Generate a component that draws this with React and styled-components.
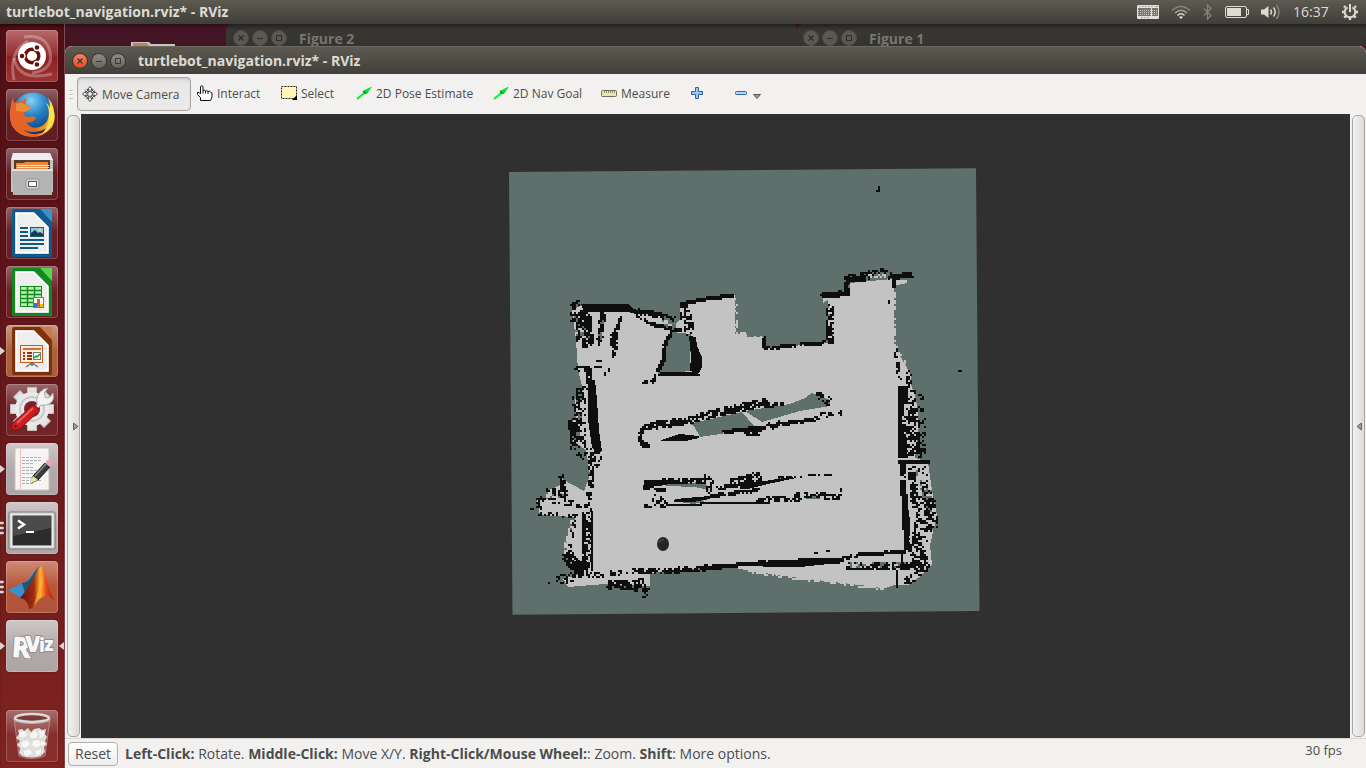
import React from "react";
import styled, { createGlobalStyle, css } from "styled-components";

const Global = createGlobalStyle`
  html, body, #root { height: 100%; }
  body {
    margin: 0;
    overflow: hidden;
    background: #451526;
    font-family: "Open Sans", "Noto Sans", sans-serif;
    color: #4c4c4c;
  }
  * { box-sizing: border-box; }
  button { font: inherit; color: inherit; margin: 0; padding: 0; border: 0; background: none; }
  svg { display: block; flex: none; }
`;

const Screen = styled.div`
  height: 100vh;
  display: flex;
  flex-direction: column;
`;

const TopPanel = styled.header`
  flex: none;
  height: 24px;
  display: flex;
  align-items: center;
  justify-content: space-between;
  padding: 0 7px 0 6px;
  background: linear-gradient(#5e5d51, #5a584f 2px, #3f3e39);
  color: #dfdbd2;
`;

const PanelTitle = styled.span`
  font-size: 14px;
  font-weight: 700;
  line-height: 22px;
  white-space: nowrap;
`;

const Indicators = styled.div`
  display: flex;
  align-items: center;
  gap: 12px;
`;

const Clock = styled.time`
  width: 36px;
  font-size: 14px;
  line-height: 24px;
`;

const Workspace = styled.div`
  flex: 1;
  min-height: 0;
  display: flex;
`;

const Launcher = styled.nav`
  flex: none;
  width: 65px;
  display: flex;
  flex-direction: column;
  gap: 7px;
  padding: 6px 0 6px 0;
  border-right: 1px solid #7d4a4f;
  background: linear-gradient(#500f15, #5d1319 30%, #6c1a1d 60%, #80231f);
  box-shadow: inset 0 3px 3px -1px rgba(0, 0, 0, 0.5);

  & > :last-child { margin-top: auto; }
`;

const LaunchRow = styled.div`
  display: grid;
  grid-template-columns: 6px 52px 6px;
  align-items: center;
`;

const tones = {
  plain: "linear-gradient(rgba(255,255,255,.34), rgba(255,255,255,.06) 48%, rgba(255,255,255,.05))",
  red: "linear-gradient(#b66a6b, #952d2f 48%, #8c2021 52%, #9d3434)",
  orange: "linear-gradient(#c49a80, #ad6238 50%, #a85d35)",
  matlab: "linear-gradient(#cd8b76, #b6563b 50%, #b0543c)",
  gray: "linear-gradient(#cec8c9, #b2a9aa 50%, #aea5a6)",
};

const LaunchTile = styled.button`
  width: 52px;
  height: 52px;
  border-radius: 4px;
  background: ${(p) => tones[p.$tone || "plain"]};
  box-shadow: inset 0 0 0 1px rgba(255, 255, 255, 0.2), 0 0 2px rgba(0, 0, 0, 0.25);
`;

const Desktop = styled.main`
  flex: 1;
  min-width: 0;
  display: flex;
  flex-direction: column;
`;

const BackStrip = styled.div`
  flex: none;
  height: 22px;
  display: grid;
  grid-template-columns: 161px 570px 1fr;
  background: linear-gradient(#2d0e19, #451424 5px, #431524);
`;

const FolderSlot = styled.div`
  display: flex;
  align-items: flex-end;
  padding-left: 66px;
`;

const BackWindow = styled.div`
  display: flex;
  align-items: center;
  gap: 12px;
  padding: 6px 0 0 7px;
  overflow: hidden;
  border-radius: 6px 0 0 0;
  background: linear-gradient(#22221f, #383733 6px, #34332f);
  font-size: 14px;
  font-weight: 700;
  color: #77756e;
`;

const AppWindow = styled.section`
  flex: 1;
  min-height: 0;
  display: flex;
  flex-direction: column;
  border-radius: 7px 7px 0 0;
  overflow: hidden;
  background: #f2f1f0;
`;

const TitleBar = styled.div`
  flex: none;
  height: 28px;
  display: flex;
  align-items: center;
  gap: 12px;
  padding-left: 7px;
  border-top: 1px solid #6b695e;
  border-radius: 7px 7px 0 0;
  background: linear-gradient(#5c5a50, #403f3a);
  font-size: 14px;
  font-weight: 700;
  color: #dfdbd2;
  white-space: nowrap;
`;

const WindowButtons = styled.div`
  display: flex;
  gap: 3px;
`;

const WindowButton = styled.button`
  width: 16px;
  height: 16px;
  border-radius: 50%;
  border: 1px solid ${(p) => (p.$dim ? "#4c4b46" : "#373632")};
  background: ${(p) =>
    p.$dim ? "#5a5852" : p.$close ? "linear-gradient(#f58562, #e0481c)" : "linear-gradient(#8d8b82, #66645d)"};
  color: ${(p) => (p.$dim ? "#2c2b28" : "#383732")};
`;

const Toolbar = styled.div`
  flex: none;
  height: 40px;
  display: flex;
  align-items: center;
  padding-left: 4px;
  background: #f2f1f0;
  font-size: 12px;
`;

const Grip = styled.span`
  width: 4px;
  height: 9px;
  margin-right: 4px;
  background: repeating-linear-gradient(#c9c7c4 0 1px, #fbfbfa 1px 2px, transparent 2px 4px);
`;

const ToolButton = styled.button`
  width: ${(p) => p.$width}px;
  height: 34px;
  display: flex;
  align-items: center;
  gap: 4px;
  padding-bottom: 2px;
  white-space: nowrap;
  ${(p) =>
    p.$active &&
    css`
      padding: 0 4px;
      margin-right: 6px;
      border: 1px solid #a7a5a2;
      border-radius: 4px;
      background: linear-gradient(#dddcda, #e9e8e6 6px, #ebeae9);
      box-shadow: inset 0 1px 2px rgba(0, 0, 0, 0.1);
    `}
`;

const Body = styled.div`
  flex: 1;
  min-height: 0;
  display: grid;
  grid-template-columns: 16px minmax(0, 1fr) 16px;
`;

const PanelToggle = styled.button`
  margin: 1px 1px 1px 2px;
  border: 1px solid #a9a7a3;
  border-radius: 5px;
  background: linear-gradient(90deg, #f3f2f1, #dddbd9);
  display: flex;
  align-items: center;
  justify-content: ${(p) => (p.$side === "left" ? "flex-end" : "center")};
`;

const View = styled.div`
  min-height: 0;
  background: #303030;
  & > svg { width: 100%; height: 100%; }
`;

const StatusBar = styled.footer`
  flex: none;
  height: 30px;
  display: flex;
  align-items: center;
  gap: 7px;
  padding: 0 24px 0 3px;
  border-top: 1px solid #dad8d5;
  font-size: 14px;
  white-space: nowrap;
`;

const ResetButton = styled.button`
  width: 50px;
  height: 24px;
  border: 1px solid #b2afab;
  border-radius: 4px;
  background: linear-gradient(#ffffff, #efeeed);
`;

const Hint = styled.p`
  margin: 0;
  flex: 1;
`;

const Fps = styled.span`
  align-self: flex-start;
  font-size: 13px;
  line-height: 22px;
`;

/* ---------- window controls ---------- */

function Controls({ dim }) {
  return (
    <WindowButtons>
      <WindowButton aria-label="Close" $close $dim={dim}>
        <svg width="14" height="14" stroke="currentColor" strokeWidth="1.3"><path d="M4.5 4.5l5 5M9.5 4.5l-5 5" /></svg>
      </WindowButton>
      <WindowButton aria-label="Minimize" $dim={dim}>
        <svg width="14" height="14" stroke="currentColor"><path d="M4 7.5h6" /></svg>
      </WindowButton>
      <WindowButton aria-label="Maximize" $dim={dim}>
        <svg width="14" height="14" stroke="currentColor" fill="none"><path d="M4.5 4.5h5v5h-5z" /></svg>
      </WindowButton>
    </WindowButtons>
  );
}

/* ---------- indicator icons ---------- */

const KeyboardIcon = () => (
  <svg width="22" height="14">
    <rect width="22" height="14" rx="1" fill="#e4e1dc" />
    <rect x="1" y="3" width="13" height="8" fill="#77756f" />
    <rect x="15" y="3" width="6" height="8" fill="#77756f" />
    <path d="M1 5.5h20M1 7.5h20M1 9.5h20" stroke="#c9c6c0" strokeDasharray="1 1" />
    <path d="M2 1.500h14M4 12.500h9" stroke="#aaa8a2" strokeDasharray="2 1" />
    <rect x="18" y="1" width="3" height="1" fill="#86c25a" />
  </svg>
);
const WifiIcon = () => (
  <svg width="20" height="14" fill="none" strokeWidth="1.6">
    <path d="M1 5.500Q10-2.500 19 5.500" stroke="#85837b" />
    <path d="M4 8Q10 2.500 16 8" stroke="#a5a298" />
    <path d="M6.500 10.500Q10 7 13.500 10.500" stroke="#dfdbd2" />
    <path d="M8 12L10 14 12 12Q10 10.500 8 12Z" fill="#dfdbd2" />
  </svg>
);
const BluetoothIcon = () => (
  <svg width="10" height="16" fill="none" stroke="#85837b" strokeWidth="1.2">
    <path d="M1 4.500l7 7-3.500 3.500V1L8 4.500l-7 7" />
  </svg>
);
const BatteryIcon = () => (
  <svg width="24" height="14" fill="none" stroke="#dfdbd2">
    <rect x=".5" y="1.500" width="21" height="11" rx="1.500" />
    <rect x="2.500" y="3.500" width="13" height="7" fill="#dfdbd2" />
    <path d="M22 4.500h1.500v5H22" />
  </svg>
);
const SoundIcon = () => (
  <svg width="20" height="16" fill="none" strokeWidth="1.500">
    <path d="M0 5.500h3L7.500 2v12L3 10.500H0Z" fill="#dfdbd2" />
    <path d="M9.500 5.500q2 2.500 0 5M12.500 3.500q3.500 4.500 0 9" stroke="#dfdbd2" />
    <path d="M15.500 1q5 7 0 14" stroke="#85837b" />
  </svg>
);
const GearIcon = () => (
  <svg width="18" height="18" fill="none" stroke="#dfdbd2">
    <path d="M6.500 4.300a5.300 5.300 0 1 0 5 0" strokeWidth="2" />
    <path d="M9 1v8" strokeWidth="2" />
    <path d="M4.500 4.500L3 3M13.500 4.500L15 3M3.500 9H1M14.500 9H17M5 13l-1.700 1.700M13 13l1.700 1.700M9 14.500V17" strokeWidth="2.400" />
  </svg>
);

/* ---------- toolbar icons ---------- */

const MoveIcon = () => (
  <svg width="16" height="16" fill="#fff" stroke="#4a4a4a">
    <path d="M4 4l8 8M12 4l-8 8" strokeWidth="2.500" />
    <path d="M4 4l8 8M12 4l-8 8" stroke="#fff" />
    <path d="M8 .5l2.500 3H9V6H7V3.500H5.500ZM8 15.500l2.500-3H9V10H7v2.500H5.500ZM.5 8l3-2.500V7H6v2H3.500v1.500ZM15.500 8l-3-2.500V7H10v2h2.500v1.500Z" />
    <rect x="6" y="6" width="4" height="4" stroke="#777" />
  </svg>
);
const HandIcon = () => (
  <svg width="16" height="16" viewBox="0 0 16 16" fill="#fff" stroke="#111">
    <path d="M3.500 15.500V12.500L.5 9.500V7.500H2L3.500 9V1.500Q4.700 0 6 1.500V5.500Q7.300 4.500 8.500 6 9.800 5 11 6.500 12.500 5.500 13.500 7L15 8V12L13.500 15.500Z" />
    <path d="M6 5.500v3M8.500 6v2.500M11 6.500v2.500" />
  </svg>
);
const SelectIcon = () => (
  <svg width="16" height="14">
    <rect x=".5" y=".5" width="15" height="12" fill="#fff6b4" stroke="#222" strokeDasharray="2 1" />
    <path d="M16 9v5h-5Z" fill="#000" />
  </svg>
);
const ArrowIcon = () => (
  <svg width="16" height="14">
    <path d="M1 13L9 6.500" stroke="#00f62e" strokeWidth="2.200" />
    <path d="M16 .5L11 8 9.500 7.500 6.500 5Z" fill="#05e32b" />
    <path d="M7 5.500l3 2" stroke="#087b1e" strokeWidth="1.500" />
  </svg>
);
const RulerIcon = () => (
  <svg width="16" height="7" fill="#e9e5ac" stroke="#6f6d59">
    <rect x=".5" y=".5" width="15" height="6" rx="1" />
    <path d="M3.500 1v2M5.500 1v2M7.500 1v2M9.500 1v2M11.500 1v2M13.500 1v2" strokeOpacity=".7" />
  </svg>
);
const PlusIcon = () => (
  <svg width="12" height="12" fill="#9fc4e8" stroke="#2c62a8">
    <path d="M4.500.5h3v4h4v3h-4v4h-3v-4h-4v-3h4Z" />
  </svg>
);
const MinusIcon = () => (
  <svg width="12" height="4" fill="#b7d3ee" stroke="#2c62a8"><rect x=".5" y=".5" width="11" height="3" rx="1" /></svg>
);
const CaretIcon = () => (
  <svg width="10" height="12"><path d="M2.500 7.500h7L6 11.500Z" fill="#999" stroke="#5c5c5c" /></svg>
);

/* ---------- launcher icons, drawn on a 52 unit square ---------- */

const Art = ({ children }) => <svg width="52" height="52" viewBox="0 0 52 52">{children}</svg>;

const DashArt = () => (
  <Art>
    <g fill="none" stroke="#fff" strokeOpacity=".28">
      <path d="M18 7Q40 4 44 22T26 43" strokeWidth="3" />
      <path d="M8 50Q2 22 22 11" strokeWidth="3" />
      <path d="M8 28Q12 52 46 44" strokeWidth="3" />
    </g>
    <circle cx="26" cy="26" r="14" fill="#fff" />
    <circle cx="26" cy="26" r="6.800" fill="none" stroke="#64110f" strokeWidth="3.400" />
    <g fill="#64110f" stroke="#fff" strokeWidth="1.400">
      <circle cx="16" cy="26" r="3" /><circle cx="31" cy="17.500" r="3" /><circle cx="31" cy="34.500" r="3" />
    </g>
  </Art>
);

const FirefoxArt = () => (
  <Art>
    <defs>
      <radialGradient id="globe" cx=".45" cy=".2" r=".8"><stop offset="0" stopColor="#8ad2f5" /><stop offset=".45" stopColor="#2484c6" /><stop offset="1" stopColor="#113a7a" /></radialGradient>
      <linearGradient id="fox" x1="0" x2="1"><stop offset="0" stopColor="#e8632c" /><stop offset=".55" stopColor="#e4641f" /><stop offset="1" stopColor="#fbd93c" /></linearGradient>
    </defs>
    <circle cx="27" cy="24" r="20.500" fill="url(#globe)" />
    <path d="M7 8Q7 12 9 14 13 12 15 13 18 10 21 9 19 13 20 16 25 17 25 19 22 22 18 24 18 28 23 28 27 26 30 29 26 35 20 33 26 42 36 37 43 33 43 23 47 30 42 38 31 46 17 41 29 49 40 42 48 34 48 23 50 31 46 38 38 48 26 48 13 48 6 37 1 25 7 8Z" fill="url(#fox)" />
    <path d="M42 9Q50 18 48 31 45 41 36 45 44 36 43 25 43 17 39 13 43 16 44 19 44 13 42 9Z" fill="#fde04a" />
    <path d="M10 15q5-3 10 1l5 2q-2 4-7 5l-8-1Z" fill="#f08a3b" />
  </Art>
);

const FilesArt = () => (
  <Art>
    <path d="M7 5h37l3 7v32H5V12Z" fill="#c4c4c4" />
    <path d="M7 5h37l3 7H5Z" fill="#ededed" />
    <rect x="8" y="12" width="36" height="11" fill="#5c3a24" />
    <path d="M10 23v-8h8l1-1h23v9Z" fill="#e68a43" />
    <path d="M11 17.500h32M11 19.500h32" stroke="#fbe3c8" />
    <path d="M6 21h41l-1 26H7Z" fill="#b4b4b4" />
    <path d="M6 21h41v2H6Z" fill="#e2e2e2" />
    <rect x="20" y="31" width="13" height="10" rx="2" fill="#d9d9d9" stroke="#919191" />
    <rect x="22.500" y="33.500" width="8" height="5" fill="#fff" stroke="#555" />
  </Art>
);

const DocBase = ({ edge, fold, dark }) => (
  <>
    <path d="M8 2h38v48H8Q6 50 6 48V4Q6 2 8 2Z" fill={edge} />
    <path d="M34 2h12v13Z" fill={fold} />
    <path d="M9 5h19l15 15v27H9Z" fill="#fff" stroke={dark} strokeOpacity=".3" />
    <path d="M11 7h16l14 14v24H11Z" fill="#eee" />
  </>
);

const WriterArt = () => (
  <Art>
    <DocBase edge="#0e5a91" fold="#3c93cb" dark="#063557" />
    <path d="M14 21h8M14 25h8M14 29h8M14 33h24M14 37h24M14 41h18" stroke="#125886" strokeWidth="2" />
    <rect x="24.500" y="20.500" width="13" height="9" fill="#8ec6e8" stroke="#135a86" />
    <path d="M25 29v-3l4-3 3 3 2-1 3 2v2Z" fill="#1e3d4c" /><circle cx="34" cy="23" r="1.500" fill="#fbd55a" />
  </Art>
);

const CalcArt = () => (
  <Art>
    <DocBase edge="#128a1f" fold="#5ed34e" dark="#0a5514" />
    <rect x="14.500" y="20.500" width="21" height="20" fill="#b8f0ad" stroke="#138a20" />
    <path d="M14 24.500h22M14 28.500h22M14 32.500h22M14 36.500h22M21.500 20v21M28.500 20v21" stroke="#138a20" strokeWidth="1.400" />
    <rect x="27.500" y="31.500" width="10" height="10" fill="#fff" stroke="#777" />
    <path d="M28 37h3v4h-3Z" fill="#2a79c4" /><path d="M31 33h3v8h-3Z" fill="#e35c1e" /><path d="M34 38h3v3h-3Z" fill="#f6b921" />
  </Art>
);

const ImpressArt = () => (
  <Art>
    <DocBase edge="#813009" fold="#c77a4c" dark="#50200a" />
    <rect x="14.500" y="20.500" width="22" height="17" fill="#fdeee3" stroke="#c55a1d" />
    <path d="M17 24h18" stroke="#dc6b25" strokeWidth="2" />
    <path d="M17 28h2M17 31h2M17 34h2M21 28h5M21 31h5M21 34h5" stroke="#93350a" strokeWidth="2" />
    <rect x="27.500" y="27.500" width="7" height="7" fill="#f3fff1" stroke="#777" />
    <path d="M28 33l2-2 1 1 3-3" stroke="#22a32f" strokeWidth="1.500" fill="none" />
    <path d="M20 42l6-4 6 4M26 38v3" stroke="#777" strokeWidth="1.500" fill="none" />
  </Art>
);

const SettingsArt = () => (
  <Art>
    <g transform="translate(26 25)">
      {[0, 45, 90, 135].map((a) => (
        <path key={a} d="M-4.500-21.500h9v43h-9Z" fill="#e3e3e3" stroke="#c0c0c0" transform={`rotate(${a})`} />
      ))}
      <circle r="17" fill="#e9e9e9" />
      <circle r="12" fill="none" stroke="#c9c9c9" strokeWidth="2" />
      <circle r="8" fill="#7c2228" />
    </g>
    <path d="M31 21Q29 10 38 5L42 4 38 9 40 14 44 13 47 9Q49 17 43 20 39 22 35 21L30 26 27 23Z" fill="#f3f3f3" stroke="#aaa" />
    <path d="M27 21Q32 22 33 27L16 43Q10 48 6 45 4 41 9 37Z" fill="#cd1d21" stroke="#8a1115" />
    <path d="M27 24L11 39" stroke="#ed5d59" strokeWidth="2" /><circle cx="9.500" cy="42.500" r="1.500" fill="#8d1114" />
  </Art>
);

const EditorArt = () => (
  <Art>
    <path d="M9 5h34v42H9Z" fill="#f6f5f3" stroke="#c8c2c0" />
    <path d="M14.500 6v40" stroke="#f1b9b9" />
    {[14, 17, 20, 24, 27, 30, 34, 37, 40].map((y) => (
      <path key={y} d={`M16 ${y}.500h${y % 4 ? 20 : 12}`} stroke="#a9b0b5" strokeDasharray="3 1" />
    ))}
    <path d="M25 40l2-7 12-13 5 4-12 13Z" fill="#3a3a3a" stroke="#222" />
    <path d="M29 33L40 21" stroke="#8a8a8a" strokeWidth="1.500" />
    <path d="M23 41l4-8 5 4Z" fill="#efe39b" /><path d="M39 20l2-3h4l2 3-3 4Z" fill="#e7a2c5" />
  </Art>
);

const TerminalArt = () => (
  <Art>
    <rect x="3" y="10" width="46" height="37" rx="1" fill="#d9d9d9" stroke="#757575" />
    <rect x="6" y="13" width="40" height="31" fill="#2c2c2c" stroke="#fff" />
    <path d="M7 14h38v12L7 34Z" fill="#4b4b4b" />
    <path d="M12 18.500l6 4-6 4" stroke="#fff" strokeWidth="2.400" fill="none" /><path d="M20 30h8" stroke="#fff" strokeWidth="2" />
  </Art>
);

const MatlabArt = () => (
  <Art>
    <defs>
      <linearGradient id="peak" x1="0" x2="1"><stop offset="0" stopColor="#5a1410" /><stop offset=".4" stopColor="#a52a12" /><stop offset=".58" stopColor="#ffb02e" /><stop offset=".75" stopColor="#e5421c" /><stop offset="1" stopColor="#a81e13" /></linearGradient>
    </defs>
    <path d="M2 29L16 22Q20 22 23 17 29 11 33 5L24 27 15 37Z" fill="#3c8fc9" />
    <path d="M16 22Q22 22 26 15L33 5 24 27 19 32Z" fill="#27516f" />
    <path d="M14 37Q22 28 26 20 31 9 35 5 38 7 41 19 44 32 49 40 43 34 39 35 34 36 30 43 26 48 23 48 22 38 14 37Z" fill="url(#peak)" />
    <path d="M27 46q6-14 8-38 4 14-1 27-3 7-7 11Z" fill="#f9b236" fillOpacity=".7" />
  </Art>
);

const RvizArt = () => (
  <Art>
    <g fontFamily="'Open Sans', sans-serif" fontWeight="800" fill="#f7f7f7" stroke="#8d8888" strokeWidth="1.600" paintOrder="stroke">
      <text x="5" y="37" fontSize="29" transform="rotate(4 5 36)">R</text>
      <text x="19" y="32" fontSize="23">V</text>
      <text x="33" y="32" fontSize="19">i</text>
      <text x="38" y="31" fontSize="19">z</text>
    </g>
  </Art>
);

const TrashArt = () => (
  <Art>
    <path d="M8 9l5 37q13 5 26 0l5-37Z" fill="#fff" fillOpacity=".12" stroke="#fff" strokeOpacity=".35" />
    <ellipse cx="26" cy="8" rx="17" ry="4" fill="#7e3a3a" stroke="#d9dbd9" strokeWidth="2.500" />
    <path d="M9 11q17 5 34 0" fill="none" stroke="#b7b9b7" />
    <path d="M12 20l4-1 2 2 4-3 3 4 3-3 5-1 3 2 4-1-1 5 2 3-2 4 2 3-3 3 1 5-4 4q-9 3-19 0l-3-3 1-5-3-3 3-4-4-3 3-4Z" fill="#dededb" />
    <g fill="#f6f6f4">
      <path d="M14 22l5-1 2 4-4 3-4-2ZM24 24l5-3 3 3-2 4-5 0ZM33 21l5 0 0 5-4 2ZM16 32l5-2 3 4-4 4-5-2ZM27 31l6-1 2 5-5 3-4-3ZM35 31l4 1-1 4-3-1ZM18 41l6-2 2 4-4 3-4-1ZM29 41l6-2 0 4-4 3Z" />
    </g>
  </Art>
);

const apps = [
  { name: "Dash", Icon: DashArt, tone: "red" },
  { name: "Firefox", Icon: FirefoxArt },
  { name: "Files", Icon: FilesArt },
  { name: "Writer", Icon: WriterArt },
  { name: "Calc", Icon: CalcArt },
  { name: "Impress", Icon: ImpressArt, tone: "orange", open: 1 },
  { name: "System Settings", Icon: SettingsArt },
  { name: "Text Editor", Icon: EditorArt, tone: "gray", open: 1 },
  { name: "Terminal", Icon: TerminalArt, tone: "gray", open: 3 },
  { name: "MATLAB", Icon: MatlabArt, tone: "matlab", open: 3 },
  { name: "RViz", Icon: RvizArt, tone: "gray", open: 1, focused: true },
  { name: "Trash", Icon: TrashArt },
];

const Pips = ({ count }) => (
  <svg width="6" height="14" fill="#dcd3d3">
    {count === 1 && <path d="M0 3l5 4-5 4Z" />}
    {count === 3 && <path d="M0 1h3l1 1-1 1H0ZM0 6h3l1 1-1 1H0ZM0 11h3l1 1-1 1H0Z" stroke="#dcd3d3" strokeWidth=".6" />}
  </svg>
);

/* ---------- occupancy grid map ---------- */

const CELL = 2;

/* Repeatable value in [0, 1) for a grid position. */
function hash(x, y, seed) {
  let h = Math.imul(x, 374761393) + Math.imul(y, 668265263) + Math.imul(seed, 1442695041);
  h = Math.imul(h ^ (h >>> 13), 1274126177);
  h = Math.imul(h ^ (h >>> 15), 2246822519);
  return ((h ^ (h >>> 16)) >>> 0) / 4294967296;
}

/* Walks a polyline and marks grid cells within `spread` of it; `fill` is the share of cells marked.
   Half of the draws are shared by a 2 by 2 block, so that marked cells clump together. */
function scatter(points, spread, fill, seed) {
  const seen = new Set();
  let d = "";
  for (let i = 0; i < points.length - 1; i++) {
    const [x0, y0] = points[i];
    const [x1, y1] = points[i + 1];
    const dx = x1 - x0;
    const dy = y1 - y0;
    const len = Math.hypot(dx, dy) || 1;
    for (let t = 0; t <= len; t += 1) {
      for (let o = -spread; o <= spread; o += 1) {
        const px = x0 + (dx * t) / len - (dy / len) * o;
        const py = y0 + (dy * t) / len + (dx / len) * o;
        const cx = Math.floor(px / CELL) * CELL;
        const cy = Math.floor(py / CELL) * CELL;
        const key = cx + "," + cy;
        if (seen.has(key)) continue;
        seen.add(key);
        const clumped = hash(cx, cy, seed) < 0.5;
        const draw = clumped ? hash(cx >> 2, cy >> 2, seed + 7) : hash(cx, cy, seed + 13);
        if (draw < fill) d += `M${cx} ${cy}h2v2h-2z`;
      }
    }
  }
  return d;
}

const free = "#c3c3c3";
const unknown = "#5f6f6c";
const wall = "#0e0e0e";

const noise = [
  // free cells spilling over the border
  [free, [[735, 296], [735, 333], [762, 338]], 1, 0.3],
  [free, [[894, 286], [894, 345], [906, 366]], 1, 0.5],
  [free, [[548, 494], [566, 500], [540, 507]], 3, 0.5],
  [unknown, [[914, 470], [930, 500], [934, 530]], 4, 0.3],
  [free, [[750, 571], [800, 578], [884, 588]], 1, 0.6],
  [free, [[566, 560], [568, 540], [574, 520]], 2, 0.6],
  // upper left corner
  [wall, [[572, 306], [581, 304]], 3, 0.5],
  [wall, [[573, 306], [573, 320]], 2, 0.5],
  [wall, [[577, 312], [580, 340]], 2, 0.6],
  [unknown, [[582, 314], [583, 338]], 7, 0.3],
  [wall, [[586, 310], [587, 334], [588, 346]], 5, 0.8],
  [unknown, [[604, 314], [600, 342]], 1, 0.7],
  [wall, [[603, 313], [599, 346]], 2, 0.55],
  [wall, [[621, 318], [614, 338], [614, 356]], 1, 0.7],
  [wall, [[614, 332], [615, 350]], 3, 0.65],
  [wall, [[596, 360], [600, 360]], 0, 1],
  [wall, [[595, 367], [601, 367]], 0, 1],
  [wall, [[611, 362], [606, 376]], 1, 0.25],
  [wall, [[639, 311], [662, 316], [674, 320]], 2, 0.9],
  [wall, [[637, 315], [655, 325], [681, 331]], 1, 0.9],
  [unknown, [[660, 319], [676, 327]], 3, 0.5],
  [free, [[640, 315], [655, 320], [664, 324]], 1, 0.7],
  [wall, [[576, 370], [588, 368], [590, 388]], 2, 0.75],
  // pillar pocket
  [wall, [[671, 332], [665, 345], [663, 360], [658, 372]], 1, 0.85],
  [wall, [[660, 375], [698, 373]], 1, 0.9],
  [wall, [[656, 376], [653, 381], [643, 382]], 1, 0.75],
  [wall, [[682, 305], [682, 318], [689, 334]], 2, 0.6],
  [wall, [[684, 303], [692, 329]], 2, 0.7],
  [wall, [[681, 304], [706, 299], [734, 295]], 1, 1],
  // centre top edge
  [wall, [[764, 338], [765, 348]], 1, 1],
  [wall, [[765, 349], [790, 346], [834, 342]], 1, 0.85],
  [wall, [[829, 306], [831, 342]], 3, 0.8],
  [free, [[828, 310], [831, 340]], 1, 0.25],
  [wall, [[822, 296], [848, 293]], 2, 0.9],
  [wall, [[847, 280], [848, 294]], 2, 0.8],
  [wall, [[846, 279], [866, 276], [880, 272], [895, 277]], 3, 0.65],
  [wall, [[892, 277], [912, 275]], 2, 0.85],
  [free, [[868, 275], [886, 275]], 1, 0.4],
  [wall, [[894, 280], [894, 288]], 1, 0.8],
  [wall, [[889, 300], [889, 303]], 0, 1],
  [wall, [[895, 344], [895, 350], [898, 370], [902, 382]], 1, 0.4],
  [wall, [[908, 372], [910, 386]], 2, 0.6],
  [wall, [[878, 187], [878, 190], [876, 192]], 0, 1],
  [wall, [[959, 370], [960, 370]], 0, 1],
  // left wall
  [wall, [[586, 388], [576, 396], [578, 420], [574, 440]], 3, 0.7],
  [wall, [[581, 390], [580, 450]], 5, 0.3],
  [unknown, [[578, 392], [574, 445]], 4, 0.2],
  [wall, [[571, 420], [574, 448]], 2, 0.8],
  [wall, [[578, 455], [592, 462]], 4, 0.3],
  [wall, [[586, 450], [597, 456], [592, 470]], 4, 0.6],
  [free, [[595, 450], [597, 475]], 2, 0.3],
  [wall, [[592, 466], [589, 500]], 2, 0.65],
  [wall, [[588, 510], [589, 570]], 3, 0.55],
  [wall, [[583, 512], [583, 572]], 1, 0.75],
  [wall, [[561, 476], [566, 500]], 2, 0.6],
  [wall, [[547, 488], [563, 496]], 2, 0.35],
  [wall, [[538, 499], [539, 513]], 2, 0.55],
  [wall, [[540, 499], [590, 506]], 2, 0.3],
  [wall, [[540, 514], [576, 516]], 1, 0.5],
  [wall, [[531, 508], [532, 508]], 0, 1],
  [wall, [[575, 517], [570, 550]], 1, 0.35],
  [wall, [[566, 554], [576, 566], [588, 570]], 5, 0.7],
  [wall, [[557, 580], [572, 578]], 4, 0.4],
  [wall, [[548, 583], [549, 583]], 0, 1],
  [wall, [[570, 574], [610, 574], [650, 570]], 2, 0.6],
  // lower edge
  [wall, [[608, 584], [625, 585], [644, 583]], 4, 0.7],
  [wall, [[634, 588], [648, 592]], 3, 0.35],
  [wall, [[643, 597], [644, 597]], 0, 1],
  [wall, [[648, 572], [695, 569], [725, 566]], 2, 0.75],
  [wall, [[700, 568], [750, 564], [800, 564]], 1, 0.9],
  [wall, [[760, 563], [838, 561]], 2, 0.95],
  [wall, [[838, 560], [862, 554], [905, 552]], 1, 0.95],
  [wall, [[846, 565], [922, 565]], 3, 0.75],
  [unknown, [[850, 564], [905, 564]], 2, 0.25],
  // shelf one
  [wall, [[644, 427], [690, 420], [720, 412], [768, 402]], 3, 0.72],
  [wall, [[644, 427], [639, 438], [643, 445], [650, 446]], 1, 0.95],
  [wall, [[644, 444], [648, 447]], 2, 0.45],
  [wall, [[724, 432], [765, 427]], 1, 0.95],
  [wall, [[745, 434], [762, 432]], 2, 0.75],
  [wall, [[768, 424], [775, 428], [779, 422]], 1, 0.8],
  [wall, [[764, 406], [784, 404]], 1, 0.8],
  [wall, [[780, 424], [812, 420], [818, 418]], 1, 0.85],
  [wall, [[815, 394], [830, 402]], 3, 0.65],
  [wall, [[822, 415], [832, 414]], 2, 0.6],
  [wall, [[840, 414], [841, 410]], 1, 0.8],
  // shelf two
  [wall, [[645, 483], [662, 482], [705, 480]], 2, 0.8],
  [wall, [[645, 488], [665, 490]], 1, 0.8],
  [wall, [[654, 499], [667, 506]], 4, 0.65],
  [wall, [[645, 507], [655, 506]], 1, 0.5],
  [wall, [[667, 505], [700, 504], [770, 502]], 0, 1],
  [wall, [[704, 478], [711, 484], [709, 494]], 3, 0.5],
  [wall, [[730, 482], [762, 474]], 2, 0.65],
  [wall, [[711, 496], [760, 490]], 1, 0.85],
  [wall, [[718, 488], [745, 484], [762, 480]], 1, 0.85],
  [wall, [[778, 478], [800, 476], [834, 474]], 0, 0.75],
  [wall, [[758, 501], [775, 499], [800, 498]], 2, 0.65],
  [wall, [[796, 496], [810, 495], [840, 497]], 2, 0.65],
  [wall, [[841, 488], [841, 491]], 0, 1],
  // right wall
  [wall, [[907, 390], [907, 430], [914, 455]], 8, 0.75],
  [wall, [[918, 390], [921, 425], [922, 456]], 4, 0.4],
  [free, [[909, 402], [908, 425]], 3, 0.5],
  [wall, [[898, 462], [928, 462]], 1, 0.9],
  [wall, [[912, 468], [914, 500]], 3, 0.65],
  [wall, [[922, 468], [925, 485], [932, 510]], 3, 0.4],
  [wall, [[902, 464], [905, 510], [907, 550]], 2, 0.88],
  [wall, [[914, 500], [925, 510], [920, 540]], 7, 0.45],
  [wall, [[930, 500], [934, 530]], 4, 0.45],
  [wall, [[912, 540], [920, 560], [922, 572]], 7, 0.65],
  [wall, [[920, 575], [905, 582]], 3, 0.35],
  [wall, [[815, 552], [816, 552]], 0, 1],
  [wall, [[827, 550], [828, 550]], 0, 1],
  [wall, [[896, 570], [896, 586]], 0, 1],
];

const cells = noise.map(([color, points, spread, fill], i) => ({
  color,
  d: scatter(points, spread, fill, 31 * (i + 3)),
}));

function OccupancyMap() {
  return (
    <svg viewBox="81 114 1269 624" role="img" aria-label="Occupancy grid map">
      <path d="M509 172L976 168.300 979.500 611 512.500 614.700Z" fill={unknown} />
      <g shapeRendering="crispEdges">
        <path
          fill={free}
          d="M572 310L580 306 634 310 650 312 666 318 674 325 680 320 680 308 688 302 735 295V334H747V337H763V349L834 342 828 300 823 303 823 298 850 293 850 283 892 279 907 280V283L894 286V345L900 356 905 364 911 376V385L916 398 919 425 915 458 928 462 932 490 937 515 930 545 932 565 918 578 908 585H895L885 588 800 578 750 571 735 568 700 568 650 573 650 586 605 584 568 587 563 579 585 573 568 560 566 544 573 530 575 517 540 515 537 500 560 498 566 494 545 492 562 484 562 479 584 491 590 475 586 450 572 440 575 400 583 390 578 370 576 340Z"
        />
        {/* unexplored pockets */}
        <path fill={unknown} d="M672 332L691 334 690 371 658 374 664 356 666 343Z" />
        <path fill={unknown} d="M688 424L733 414 742 412 755 427 720 434 700 437Z M745 411L790 404 805 398 812 393 830 400 830 406 800 411 762 422Z M665 484L705 482 709 490 695 487 666 486Z M679 502L695 499 706 501 694 504Z M805 496L820 495 820 499 806 499Z" />
        <path fill={free} d="M686 422L694 426 700 437 695 437Z" />
        {/* solid wall runs */}
        <path
          fill={wall}
          d="M581 304L628 304 634 309 640 311 640 315 628 312 584 312Z
             M689 336L696 337 697 346 702 357 702 367 699 373 690 371 691 356Z
             M588 380H595L597 400 599 430 602 451 597 455 592 447 588 420Z
             M661 440L680 434 699 436 699 438 686 441H661Z
             M645 482L672 480 672 484 650 486 649 490H643V486Z
             M675 499L710 496 710 499 693 502H674Z
             M740 486L765 481 790 477 796 478 768 484 748 489H740Z
             M898 386H908L907 400 902 417 902 430 907 438 907 458H898Z
             M847 277L866 275 866 282 850 282 847 288ZM824 294L848 291 848 294 824 296Z
             M903 490L907 500 910 520 909 550H904Z
             M725 564L790 562 838 560 838 563 800 567 725 566Z
             M571 561H587V566L581 573Z"
        />
        {cells.map((c, i) => (
          <path key={i} fill={c.color} d={c.d} />
        ))}
        <path d="M592 511V571M583 514V545" stroke={wall} strokeWidth="2" />
        <path d="M902 553V570" stroke={wall} strokeWidth="2" />
      </g>
      {/* robot base */}
      <ellipse cx="663" cy="544" rx="6" ry="7" fill="#222624" />
      <path d="M659 543q2-4 5-3" stroke="#365036" strokeWidth="1.500" fill="none" />
    </svg>
  );
}

const tools = [
  { label: "Interact", Icon: HandIcon, width: 84 },
  { label: "Select", Icon: SelectIcon, width: 75 },
  { label: "2D Pose Estimate", Icon: ArrowIcon, width: 137 },
  { label: "2D Nav Goal", Icon: ArrowIcon, width: 108 },
  { label: "Measure", Icon: RulerIcon, width: 90 },
];

export default function App() {
  return (
    <Screen>
      <Global />
      <TopPanel>
        <PanelTitle>turtlebot_navigation.rviz* - RViz</PanelTitle>
        <Indicators>
          <KeyboardIcon />
          <WifiIcon />
          <BluetoothIcon />
          <BatteryIcon />
          <SoundIcon />
          <Clock>16:37</Clock>
          <GearIcon />
        </Indicators>
      </TopPanel>
      <Workspace>
        <Launcher aria-label="Launcher">
          {apps.map(({ name, Icon, tone, open, focused }) => (
            <LaunchRow key={name}>
              <Pips count={open} />
              <LaunchTile aria-label={name} $tone={tone}>
                <Icon />
              </LaunchTile>
              {focused && (
                <svg width="6" height="14" fill="#dcd3d3"><path d="M6 3L1 7l5 4Z" /></svg>
              )}
            </LaunchRow>
          ))}
        </Launcher>
        <Desktop>
          <BackStrip>
            <FolderSlot>
              <svg width="44" height="4"><path d="M0 4V0h18l2 2h24v2Z" fill="#c9c3c3" /><path d="M2 4V1h14l2 3Z" fill="#c47e5e" /></svg>
            </FolderSlot>
            <BackWindow><Controls dim />Figure 2</BackWindow>
            <BackWindow><Controls dim />Figure 1</BackWindow>
          </BackStrip>
          <AppWindow>
            <TitleBar><Controls />turtlebot_navigation.rviz* - RViz</TitleBar>
            <Toolbar role="toolbar">
              <Grip />
              <ToolButton $active $width={114}><MoveIcon />Move Camera</ToolButton>
              {tools.map(({ label, Icon, width }) => (
                <ToolButton key={label} $width={width}><Icon />{label}</ToolButton>
              ))}
              <ToolButton aria-label="Add tool" $width={44}><PlusIcon /></ToolButton>
              <ToolButton aria-label="Remove tool" $width={30}><MinusIcon /><CaretIcon /></ToolButton>
            </Toolbar>
            <Body>
              <PanelToggle aria-label="Show left panel" $side="left">
                <svg width="6" height="9"><path d="M.5 1v7L5 4.500Z" fill="#999" stroke="#666" /></svg>
              </PanelToggle>
              <View><OccupancyMap /></View>
              <PanelToggle aria-label="Show right panel" $side="right">
                <svg width="6" height="9"><path d="M5.500 1v7L1 4.500Z" fill="#999" stroke="#666" /></svg>
              </PanelToggle>
            </Body>
            <StatusBar>
              <ResetButton>Reset</ResetButton>
              <Hint>
                <b>Left-Click:</b> Rotate. <b>Middle-Click:</b> Move X/Y. <b>Right-Click/Mouse Wheel:</b>: Zoom. <b>Shift</b>: More options.
              </Hint>
              <Fps>30 fps</Fps>
            </StatusBar>
          </AppWindow>
        </Desktop>
      </Workspace>
    </Screen>
  );
}
